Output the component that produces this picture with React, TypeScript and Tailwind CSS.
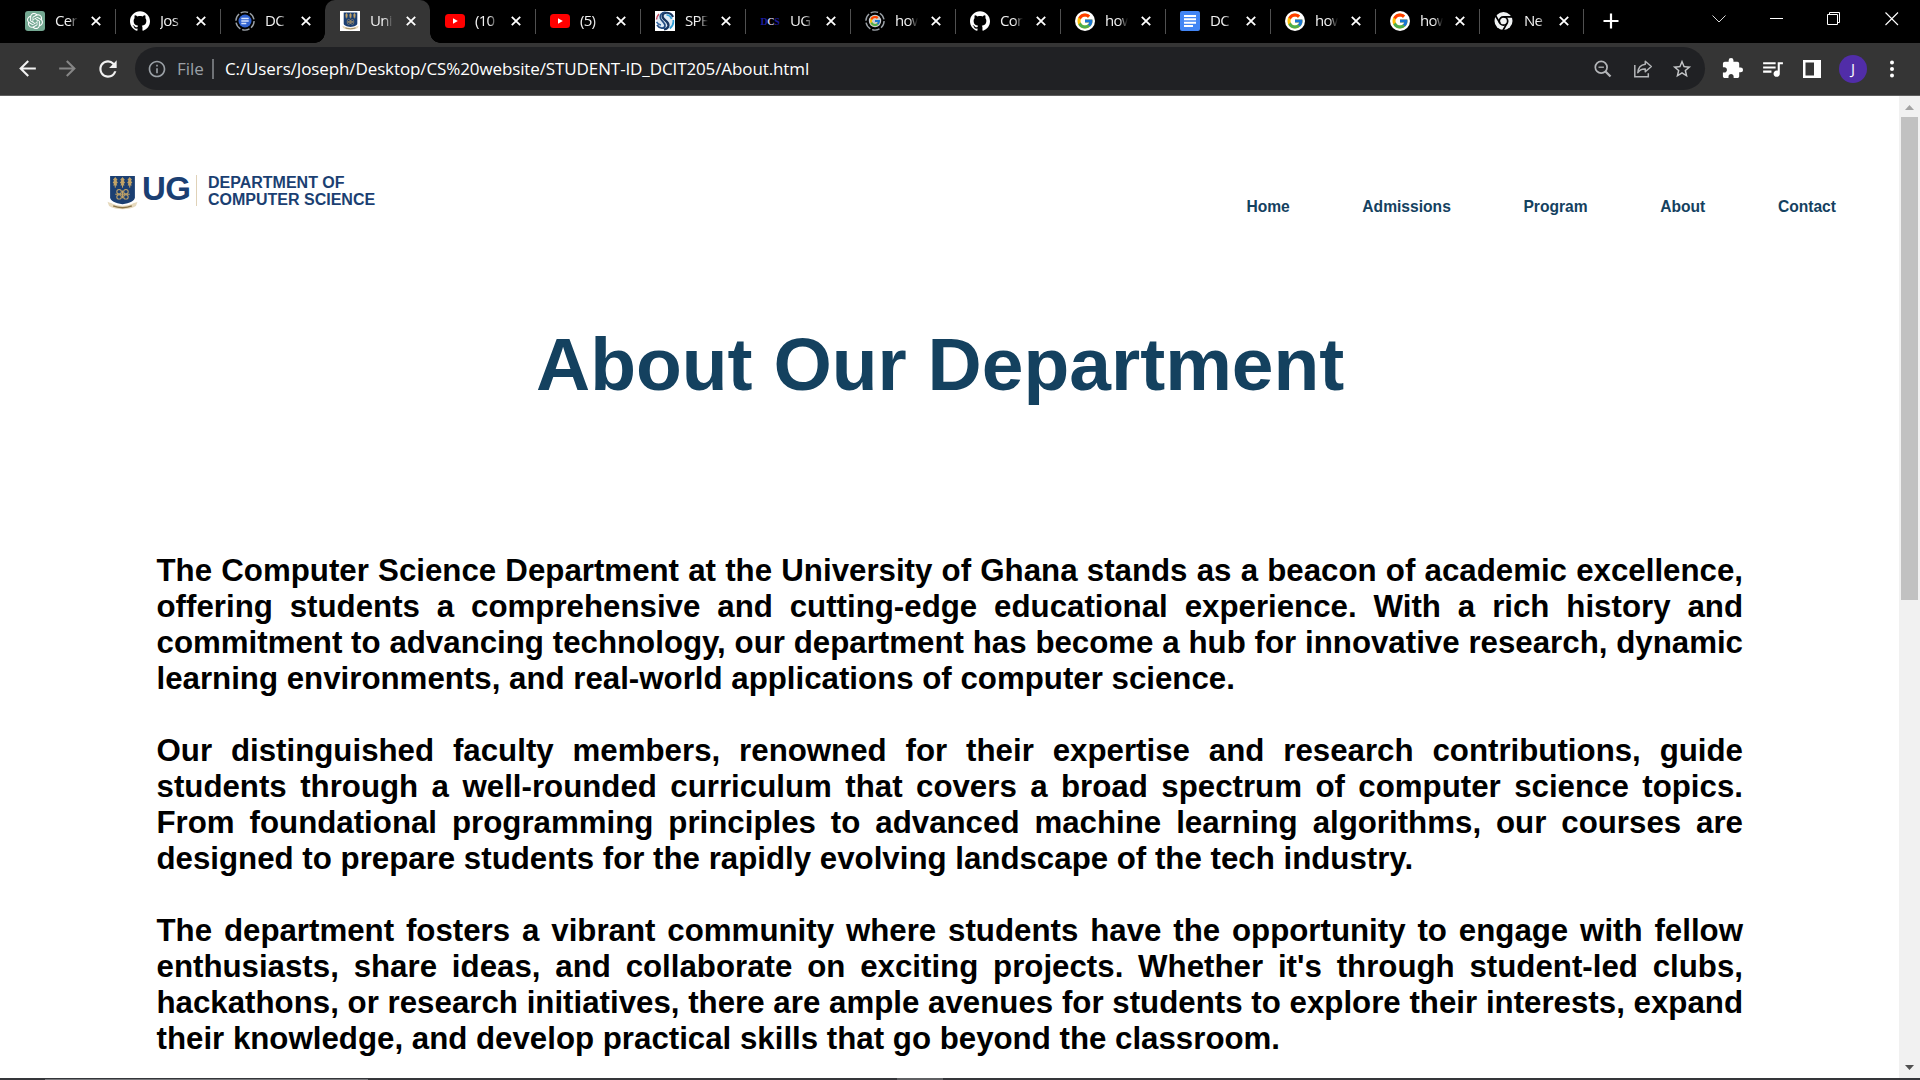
import type { ReactNode } from "react";
import { SiOpenai, SiGithub } from "react-icons/si";
import { FcGoogle } from "react-icons/fc";
import {
  MdArrowBack,
  MdArrowForward,
  MdRefresh,
  MdInfoOutline,
  MdStarOutline,
  MdExtension,
  MdQueueMusic,
} from "react-icons/md";

function Crest({ className }: { className?: string }) {
  const trees = [8, 15, 22];
  return (
    <svg viewBox="0 0 30 36" className={className} preserveAspectRatio="none">
      <path d="M3 1h24v22c0 4-5 6-12 7-7-1-12-3-12-7z" fill="#1b3f72" />
      {trees.map((x) => (
        <g key={x} fill="#c2a366">
          <path d={`M${x} 2l2.2 3-1 1 1.3 2-1.3 1 .8 1.8H${x - 2}l.8-1.8-1.3-1 1.3-2-1-1z`} />
          <rect x={x - 0.5} y="10" width="1" height="3" />
        </g>
      ))}
      <g fill="none" stroke="#c2a366" strokeWidth="1">
        <circle cx="11.7" cy="17.2" r="2.2" />
        <circle cx="18.3" cy="17.2" r="2.2" />
        <circle cx="11.7" cy="22.6" r="2.2" />
        <circle cx="18.3" cy="22.6" r="2.2" />
        <path d="M8 19.9h14M15 16v8" />
      </g>
      <path d="M.5 27.5c1 .6 2 1 3.500 1.200 3 2 7 2.800 11 2.800s8-.8 11-2.800c1.500-.2 2.500-.6 3.500-1.200l-1.500 4.500c-3.500 2.400-8 3.300-13 3.300s-9.500-.9-13-3.300z" fill="#e6d9bd" />
      <path d="M6 31.800c5 2.400 13 2.400 18 0" fill="none" stroke="#8a7448" strokeWidth="1.500" />
    </svg>
  );
}

function Ring({ children }: { children: ReactNode }) {
  return (
    <svg viewBox="0 0 20 20" className="h-5 w-5">
      <circle cx="10" cy="10" r="9.100" fill="none" stroke="#9aa0a6" strokeWidth="1.400" strokeDasharray="7.6 1.930" />
      {children}
    </svg>
  );
}

const chatgpt = (
  <div className="flex h-5 w-5 items-center justify-center rounded-[3px] bg-[#74a892]">
    <SiOpenai className="h-4 w-4 text-white" />
  </div>
);
const github = <SiGithub className="h-5 w-5 text-white" />;
const docsRing = (
  <Ring>
    <circle cx="10" cy="10" r="6.500" fill="#2f62d0" />
    <path d="M6.300 7.500h7.400M6.300 10h7.400M6.300 12.500h5" stroke="#d6e2fb" strokeWidth="1.300" />
  </Ring>
);
const crestTab = (
  <div className="flex h-5 w-5 items-center justify-center bg-white">
    <Crest className="h-[18px] w-[17px]" />
  </div>
);
const youtube = (
  <svg viewBox="0 0 20 20" className="h-5 w-5">
    <rect x="0" y="3" width="20" height="14" rx="3.500" fill="#f00" />
    <path d="M8 7.200l4.800 2.800L8 12.800z" fill="#fff" />
  </svg>
);
const spe = (
  <svg viewBox="0 0 20 20" className="h-5 w-5 bg-white">
    <circle cx="10" cy="10" r="8.500" fill="#dfeaf5" />
    <path d="M18 6C15.500.5 8 .5 7.500 5c-.4 4 6.500 5 6 9.500-.3 2-2 3.500-4.500 4" fill="none" stroke="#17345f" strokeWidth="2.200" />
    <path d="M10.500 1C6.500 1.500 4.300 4.500 5.500 7.500s5 4.500 4.500 7.500-5.500 3-8-1" fill="none" stroke="#244b80" strokeWidth="1.700" />
    <path d="M11.500 4c2 0 4 1 5 4M18.200 9c.6 3-1 6.500-3.400 8.500" fill="none" stroke="#2f9fd8" strokeWidth="1.700" />
    <path d="M1.500 8.500c0-2 1-4 2.500-5.500" fill="none" stroke="#c44a5e" strokeWidth="1.500" />
    <path d="M1.500 11c1 1.500 2.500 2.500 4.500 3" fill="none" stroke="#3b6ea8" strokeWidth="1.500" />
  </svg>
);
const dcs = (
  <div className="flex h-5 w-5 items-center justify-center font-['Liberation_Serif',serif] text-[10px] font-bold tracking-[-0.3px] text-[#1c1c9c]">
    D<span className="text-[#d0d0f5]">C</span>S
  </div>
);
const google = (
  <div className="flex h-5 w-5 items-center justify-center rounded-full bg-white">
    <FcGoogle className="h-[18px] w-[18px]" />
  </div>
);
const googleRing = (
  <div className="relative h-5 w-5">
    <Ring>
      <circle cx="10" cy="10" r="6.200" fill="#c9ccd0" />
    </Ring>
    <FcGoogle className="absolute left-1 top-1 h-3 w-3" />
  </div>
);
const docs = (
  <svg viewBox="0 0 20 20" className="h-5 w-5">
    <rect width="20" height="20" rx="2" fill="#4285f4" />
    <path d="M4 5h12M4 8.300h12M4 11.700h12M4 15h9" stroke="#fff" strokeWidth="1.900" />
  </svg>
);
const chrome = (
  <svg viewBox="0 0 20 20" className="h-5 w-5">
    <circle cx="9.500" cy="10" r="9" fill="#f1f3f4" />
    <circle cx="9.500" cy="10" r="4.200" fill="#f1f3f4" stroke="#000" strokeWidth="1.700" />
    <path d="M9.500 5.800h8.500M5.900 12.100L1.600 4.700M13.100 12.100L8.900 19.500" stroke="#000" strokeWidth="1.700" />
  </svg>
);

const tabs: { title: string; icon: ReactNode; narrow?: boolean; active?: boolean; noLine?: boolean }[] = [
  { title: "Cer", icon: chatgpt },
  { title: "Jos", icon: github },
  { title: "DC", icon: docsRing, noLine: true },
  { title: "Uni", icon: crestTab, active: true, noLine: true },
  { title: "(10", icon: youtube },
  { title: "(5)", icon: youtube },
  { title: "SPE", icon: spe },
  { title: "UG", icon: dcs },
  { title: "how", icon: googleRing },
  { title: "Con", icon: github },
  { title: "how", icon: google },
  { title: "DC", icon: docs },
  { title: "how", icon: google },
  { title: "how", icon: google, narrow: true },
  { title: "Ne", icon: chrome, narrow: true },
];

function TabStrip() {
  return (
    <div className="flex h-[43px] bg-black pl-[10px]">
      {tabs.map((t, i) => (
        <div
          key={i}
          className={`relative flex h-[43px] shrink-0 items-center pl-[15px] ${t.narrow ? "w-[104px]" : "w-[105px]"} ${t.active ? "rounded-t-[10px] bg-[#353535]" : ""}`}
        >
          {t.active && (
            <>
              <span className="absolute -left-[10px] bottom-0 h-[10px] w-[10px] bg-[radial-gradient(circle_at_0_0,transparent_9.500px,#353535_10px)]" />
              <span className="absolute -right-[10px] bottom-0 h-[10px] w-[10px] bg-[radial-gradient(circle_at_100%_0,transparent_9.500px,#353535_10px)]" />
            </>
          )}
          <span className="mb-px h-5 w-5 shrink-0">{t.icon}</span>
          <span className="-mr-[6px] mb-[3px] ml-[10px] w-[28px] whitespace-nowrap text-[15px] leading-5 tracking-[-0.700px] text-[#f1f1f1] [mask-image:linear-gradient(to_right,#000_14px,transparent_23px)]">
            {t.title}
          </span>
          <svg viewBox="0 0 10 10" className={`mb-px h-[10px] w-[10px] ${t.narrow ? "ml-[13px]" : "ml-[14px]"}`}>
            <path d="M.8.8l8.400 8.400M9.200.8L.8 9.200" stroke="#fff" strokeWidth="1.800" />
          </svg>
          {!t.noLine && <span className="absolute -right-px top-[9px] h-[25px] w-px bg-[#505050]" />}
        </div>
      ))}
      <svg viewBox="0 0 16 16" className="ml-[20px] mt-[13px] h-4 w-4 shrink-0">
        <path d="M8 .5v15M.5 8h15" stroke="#fff" strokeWidth="2.200" />
      </svg>
      <svg viewBox="0 0 14 14" className="ml-[93px] mt-3 h-[14px] w-[14px]" fill="none" stroke="#d8d8d8">
        <path d="M.5 3.500L7 10l6.500-6.500" />
      </svg>
      <svg viewBox="0 0 14 14" className="ml-[44px] mt-3 h-[14px] w-[14px]" fill="none" stroke="#fff">
        <path d="M0 6.500h13" />
      </svg>
      <svg viewBox="0 0 14 14" className="ml-[43px] mt-3 h-[14px] w-[14px]" fill="none" stroke="#fff">
        <path d="M.5 2.500h10v10H.5zM2.500 2.500v-2h10v10h-2" />
      </svg>
      <svg viewBox="0 0 14 14" className="ml-[44px] mt-3 h-[14px] w-[14px]" fill="none" stroke="#fff" strokeWidth="1.100">
        <path d="M.5.5l12.500 12.500M13 .5L.5 13" />
      </svg>
    </div>
  );
}

function Toolbar() {
  return (
    <div className="flex h-[53px] items-center border-b border-[#5e5e5e] bg-[#353535] pb-px text-[#f1f1f1]">
      <MdArrowBack className="ml-[15px] h-[25px] w-[25px]" />
      <MdArrowForward className="ml-[15px] h-[25px] w-[25px] text-[#868686]" />
      <MdRefresh className="ml-[15px] h-[26px] w-[26px]" />
      <div className="ml-[14px] flex h-[43px] w-[1570px] items-center rounded-full bg-[#202124] text-[17px]">
        <MdInfoOutline className="ml-3 h-5 w-5 text-[#9aa0a6]" />
        <span className="ml-[10px] mt-px w-[26px] text-[#9aa0a6]">File</span>
        <span className="ml-[9px] h-5 w-[2px] bg-[#6f7276]" />
        <span className="ml-[11px] mt-px grow whitespace-nowrap tracking-[-0.110px] text-white">
          C:/Users/Joseph/Desktop/CS%20website/STUDENT-ID_DCIT205/About.html
        </span>
        <svg viewBox="0 0 18 18" className="h-[18px] w-[18px]" fill="none" stroke="#b4b6b9" strokeWidth="1.700">
          <circle cx="7.200" cy="7.200" r="5.900" />
          <path d="M4.500 7.200h5.400" strokeWidth="1.300" />
          <path d="M11.500 11.500l5 5" strokeWidth="2.300" />
        </svg>
        <svg viewBox="0 0 20 20" className="ml-[21px] h-5 w-5" fill="none" stroke="#b4b6b9" strokeWidth="1.500">
          <path d="M1.800 6v11.700h13.500v-3.500" />
          <path d="M12.300 2.300l6 5.200-6 5.200V10c-3.500-.2-5.900 1-7.500 3.700.3-4.800 3-8 7.500-8.500z" strokeLinejoin="round" />
        </svg>
        <MdStarOutline className="ml-[18px] mr-[12px] mt-px h-[22px] w-[22px] text-[#c4c6c8]" />
      </div>
      <MdExtension className="ml-4 h-[23px] w-[23px] text-white" />
      <MdQueueMusic className="ml-[16px] h-[25px] w-[25px] text-white" />
      <svg viewBox="0 0 18 18" className="ml-[18px] h-[18px] w-[18px]">
        <path d="M0 0h18v18H0zM2.500 2.500v13h8.500v-13z" fill="#fff" fillRule="evenodd" />
      </svg>
      <div className="ml-[18px] flex h-7 w-7 items-center justify-center rounded-full bg-[#512da8] text-[15px] text-white">J</div>
      <svg viewBox="0 0 6 18" className="ml-[22px] h-[18px] w-[6px] fill-white">
        <circle cx="3" cy="2.500" r="2" />
        <circle cx="3" cy="9" r="2" />
        <circle cx="3" cy="15.500" r="2" />
      </svg>
    </div>
  );
}

const paragraphs = [
  "The Computer Science Department at the University of Ghana stands as a beacon of academic excellence, offering students a comprehensive and cutting-edge educational experience. With a rich history and commitment to advancing technology, our department has become a hub for innovative research, dynamic learning environments, and real-world applications of computer science.",
  "Our distinguished faculty members, renowned for their expertise and research contributions, guide students through a well-rounded curriculum that covers a broad spectrum of computer science topics. From foundational programming principles to advanced machine learning algorithms, our courses are designed to prepare students for the rapidly evolving landscape of the tech industry.",
  "The department fosters a vibrant community where students have the opportunity to engage with fellow enthusiasts, share ideas, and collaborate on exciting projects. Whether it's through student-led clubs, hackathons, or research initiatives, there are ample avenues for students to explore their interests, expand their knowledge, and develop practical skills that go beyond the classroom.",
];

function Page() {
  return (
    <div className="w-[1899px] overflow-hidden bg-white font-['Liberation_Sans',Arial,sans-serif] font-bold">
      <header className="flex h-[225px] items-start justify-between pl-[107px] pr-[63px]">
        <div className="mt-[79px] flex text-[#1b3f72]">
          <Crest className="h-[35px] w-[31px]" />
          <span className="ml-[4px] mt-[-5px] w-[50px] text-[33px] leading-[37px] tracking-[-0.5px]">UG</span>
          <span className="ml-[4px] h-[31px] w-px bg-[#e0d2b8]" />
          <span className="ml-[11px] whitespace-nowrap text-[16px] leading-[16.500px]">
            DEPARTMENT OF
            <br />
            COMPUTER SCIENCE
          </span>
        </div>
        <nav className="mt-[102px] flex gap-[72.600px] text-[15.625px] leading-[18px] text-[#14415f]">
          {["Home", "Admissions", "Program", "About", "Contact"].map((n) => (
            <a key={n}>{n}</a>
          ))}
        </nav>
      </header>
      <h1 className="pl-[536px] text-[75px] leading-[86px] text-[#14415f]">About Our Department</h1>
      <main className="ml-[156.500px] mt-[146px] flex w-[1586.500px] flex-col gap-9 text-justify text-[31.250px] leading-[36px] text-black">
        {paragraphs.map((p) => (
          <p key={p}>{p}</p>
        ))}
      </main>
    </div>
  );
}

export default function App() {
  return (
    <div className="flex h-[1080px] w-[1920px] flex-col overflow-hidden bg-white font-['Open_Sans','Noto_Sans',sans-serif]">
      <TabStrip />
      <Toolbar />
      <div className="flex min-h-0 grow">
        <Page />
        <div className="flex w-[21px] flex-col items-center bg-[#f1f1f1]">
          <svg viewBox="0 0 9 5" className="mt-[9px] h-[5px] w-[9px]">
            <path d="M0 5L4.500 0 9 5z" fill="#a3a3a3" />
          </svg>
          <div className="mt-[7px] h-[483px] w-[17px] bg-[#c1c1c1]" />
          <svg viewBox="0 0 9 5" className="mb-[8px] mt-auto h-[5px] w-[9px]">
            <path d="M0 0h9L4.500 5z" fill="#505050" />
          </svg>
        </div>
      </div>
      <div className="flex h-[2px] items-end bg-[#35363a]">
        <div className="ml-[45px] h-px w-[323px] bg-[#77787b]" />
        <div className="ml-[529px] h-[2px] w-[46px] bg-[#5f6063]" />
      </div>
    </div>
  );
}
